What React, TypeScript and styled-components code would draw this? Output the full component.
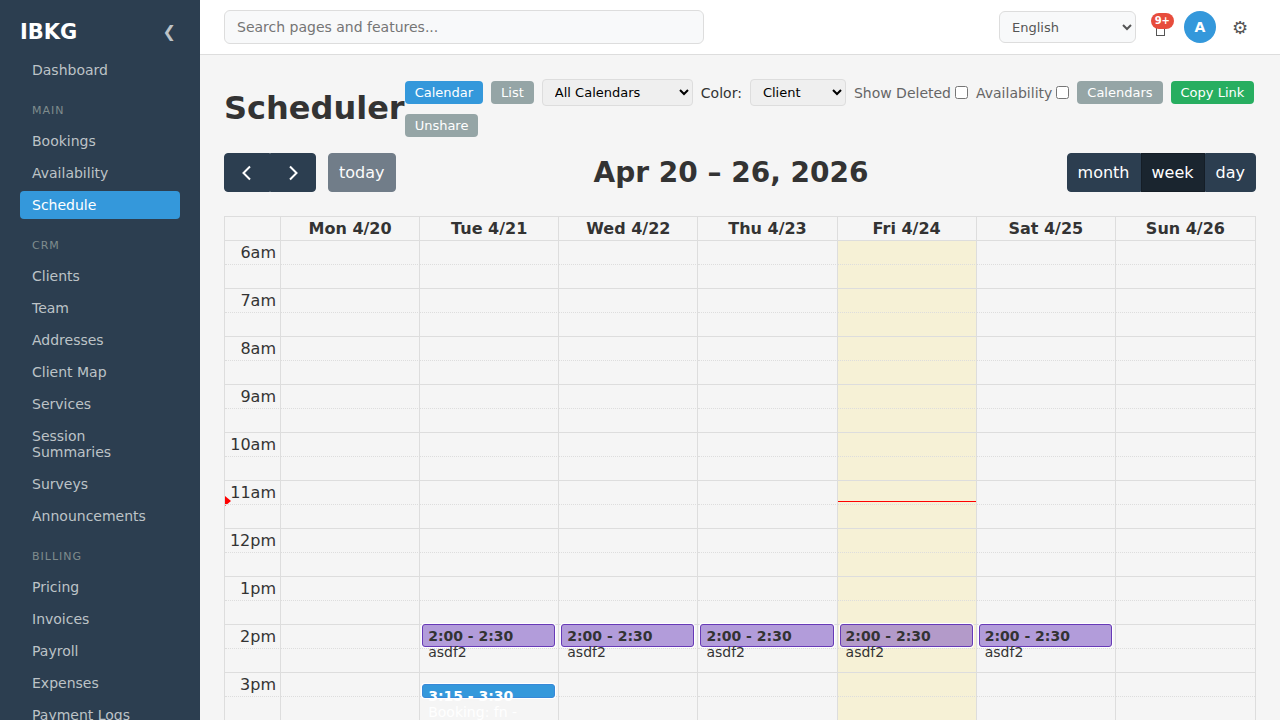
import React from "react";
import styled, { createGlobalStyle, css } from "styled-components";

const GlobalStyle = createGlobalStyle`
  *, *::before, *::after { box-sizing: border-box; }
  body {
    margin: 0;
    background: #f5f5f5;
    color: #333;
    font-family: "DejaVu Sans", sans-serif;
    font-size: 16px;
  }
  button, input, select { font-family: inherit; margin: 0; }
`;

const Shell = styled.div`
  display: flex;
  height: 100vh;
  overflow: hidden;
`;

/* Sidebar */
const Sidebar = styled.aside`
  flex: 0 0 200px;
  padding: 20px;
  background: #2c3e50;
  overflow-y: auto;
  scrollbar-width: none;
`;

const Brand = styled.div`
  display: flex;
  align-items: center;
  justify-content: space-between;
  height: 24px;
  margin-bottom: 12px;
  color: #fff;
  font-size: 21px;
  font-weight: 700;
`;

const CollapseButton = styled.button`
  padding: 0 4px;
  border: 0;
  background: none;
  color: #bdc3c7;
  font-size: 16px;
  line-height: 24px;
  cursor: pointer;
`;

const NavHeading = styled.h2`
  margin: 20px 12px 10px;
  color: #7f8c8d;
  font-size: 11px;
  font-weight: 400;
  line-height: 13px;
  letter-spacing: 1px;
  text-transform: uppercase;
`;

const NavList = styled.ul`
  display: flex;
  flex-direction: column;
  gap: 4px;
  margin: 0;
  padding: 0;
  list-style: none;
`;

const NavLink = styled.a<{ $active?: boolean }>`
  display: block;
  padding: 6px 12px;
  border-radius: 4px;
  background: ${(p) => (p.$active ? "#3498db" : "transparent")};
  color: ${(p) => (p.$active ? "#fff" : "#bdc3c7")};
  font-size: 14px;
  line-height: 16px;
  text-decoration: none;
`;

/* Top bar */
const Column = styled.div`
  display: flex;
  flex: 1;
  flex-direction: column;
  min-width: 0;
`;

const TopBar = styled.header`
  display: flex;
  flex: none;
  align-items: center;
  justify-content: space-between;
  padding: 10px 24px;
  border-bottom: 1px solid #ddd;
  background: #fff;
`;

const SearchInput = styled.input`
  flex: 0 1 480px;
  height: 34px;
  padding: 0 12px;
  border: 1px solid #ddd;
  border-radius: 6px;
  background: #f8f9fa;
  font-size: 14px;
  &::placeholder { color: #757575; }
`;

const TopActions = styled.div`
  display: flex;
  align-items: center;
  gap: 8px;
`;

const LanguageSelect = styled.select`
  width: 137px;
  height: 32px;
  padding: 0 8px;
  border: 1px solid #ddd;
  border-radius: 6px;
  background: #f8f9fa;
  color: #555;
  font-size: 13px;
`;

const IconButton = styled.button`
  position: relative;
  display: grid;
  place-items: center;
  width: 32px;
  height: 32px;
  padding: 0;
  border: 0;
  background: none;
  color: #555;
  font-size: 18px;
  cursor: pointer;
`;

const Badge = styled.span`
  position: absolute;
  top: 2px;
  right: 2px;
  padding: 0 4px;
  border-radius: 8px;
  background: #e74c3c;
  color: #fff;
  font-size: 10px;
  font-weight: 700;
  line-height: 16px;
`;

const Avatar = styled.button`
  width: 32px;
  height: 32px;
  padding: 0;
  border: 0;
  border-radius: 50%;
  background: #3498db;
  color: #fff;
  font-size: 14px;
  font-weight: 700;
`;

/* Page */
const Page = styled.main`
  flex: 1;
  padding: 24px;
  overflow-y: auto;
  scrollbar-width: none;
`;

const PageHeader = styled.div`
  display: flex;
  align-items: center;
  margin-bottom: 16px;
`;

const PageTitle = styled.h1`
  margin: 0;
  font-size: 32px;
  line-height: 37px;
`;

const Controls = styled.div`
  display: flex;
  flex: 1;
  flex-wrap: wrap;
  align-items: center;
  gap: 8px;
`;

const tones = { primary: "#3498db", muted: "#95a5a6", success: "#27ae60" };

const SmallButton = styled.button<{ $tone: keyof typeof tones }>`
  height: 23px;
  padding: 0 10px;
  border: 0;
  border-radius: 4px;
  background: ${(p) => tones[p.$tone]};
  color: #fff;
  font-size: 13px;
  line-height: 15px;
  cursor: pointer;
`;

const ControlSelect = styled.select<{ $width: number }>`
  width: ${(p) => p.$width}px;
  height: 27px;
  padding: 0 8px;
  border: 1px solid #ddd;
  border-radius: 4px;
  background: #efefef;
  color: #000;
  font-size: 13px;
`;

const FieldLabel = styled.label`
  font-size: 14px;
`;

const CheckLabel = styled.label`
  display: flex;
  align-items: center;
  gap: 4px;
  color: #666;
  font-size: 14px;
  input { width: 13px; height: 13px; }
`;

/* Calendar toolbar */
const CalendarBar = styled.div`
  display: flex;
  align-items: center;
  justify-content: space-between;
  margin-bottom: 24px;
`;

const BarGroup = styled.div`
  display: flex;
  gap: 12px;
`;

const ButtonGroup = styled.div`
  display: flex;
  > button { border-radius: 0; }
  > button:first-child { border-radius: 4px 0 0 4px; }
  > button:last-child { border-radius: 0 4px 4px 0; }
`;

const BarButton = styled.button<{ $active?: boolean }>`
  display: flex;
  align-items: center;
  justify-content: center;
  height: 39px;
  min-width: 46px;
  padding: 0 10px;
  border: 1px solid #2c3e50;
  border-radius: 4px;
  background: #2c3e50;
  color: #fff;
  font-size: 16px;
  cursor: pointer;
  ${(p) =>
    p.$active &&
    css`
      border-color: #151e27;
      background: #1a252f;
    `}
  &:disabled { opacity: 0.65; cursor: default; }
`;

const RangeTitle = styled.h2`
  margin: 0;
  font-size: 28px;
  line-height: 33px;
`;

/* Week grid */
const WeekTable = styled.table`
  width: 100%;
  border-collapse: separate;
  border-spacing: 0;
  table-layout: fixed;
  border: 1px solid #ddd;
  tr > :last-child { border-right: 0; }
`;

const AxisHead = styled.th`
  width: 56px;
  padding: 0;
  border-right: 1px solid #ddd;
`;

const DayHead = styled.th`
  height: 23px;
  padding: 0;
  border-right: 1px solid #ddd;
  font-size: 16px;
  line-height: 22px;
`;

const AxisCell = styled.th<{ $half?: boolean }>`
  position: relative;
  height: 24px;
  padding: 0 4px;
  border-top: 1px ${(p) => (p.$half ? "dotted" : "solid")} #ddd;
  border-right: 1px solid #ddd;
  font-size: 16px;
  font-weight: 400;
  line-height: 22px;
  text-align: right;
`;

const SlotCell = styled.td<{ $half?: boolean; $today?: boolean }>`
  position: relative;
  padding: 0;
  border-top: 1px ${(p) => (p.$half ? "dotted" : "solid")} #ddd;
  border-right: 1px solid #ddd;
  background: ${(p) => (p.$today ? "rgba(255, 220, 40, 0.15)" : "transparent")};
`;

const eventKinds = {
  session: css`
    top: -1px;
    height: 23px;
    border-color: #673ab7;
    background: rgba(98, 49, 187, 0.45);
    color: #333;
  `,
  booking: css`
    top: 11px;
    height: 14px;
    border-color: #3788d8;
    background: #3498db;
    color: #fff;
  `,
};

const Event = styled.a<{ $kind: keyof typeof eventKinds }>`
  position: absolute;
  z-index: 1;
  left: 2px;
  right: 3px;
  padding: 3px 5px;
  border: 1px solid;
  border-radius: 3px;
  box-shadow: 0 0 0 1px #fff;
  font-size: 14px;
  line-height: 16px;
  text-align: left;
  text-decoration: none;
  ${(p) => eventKinds[p.$kind]}
`;

const EventTime = styled.strong`
  display: block;
  white-space: nowrap;
`;

const NowLine = styled.div`
  position: absolute;
  z-index: 2;
  top: 20px;
  left: 0;
  right: 0;
  border-top: 1px solid #f00;
`;

const NowArrow = styled.div`
  position: absolute;
  top: 15px;
  left: 0;
  border-style: solid;
  border-width: 5px 0 5px 6px;
  border-color: transparent transparent transparent #f00;
`;

const sections = [
  { heading: "", items: ["Dashboard"] },
  { heading: "Main", items: ["Bookings", "Availability", "Schedule"] },
  {
    heading: "CRM",
    items: ["Clients", "Team", "Addresses", "Client Map", "Services", "Session Summaries", "Surveys", "Announcements"],
  },
  { heading: "Billing", items: ["Pricing", "Invoices", "Payroll", "Expenses", "Payment Logs"] },
];

const days = ["Mon 4/20", "Tue 4/21", "Wed 4/22", "Thu 4/23", "Fri 4/24", "Sat 4/25", "Sun 4/26"];
const hours = ["6am", "7am", "8am", "9am", "10am", "11am", "12pm", "1pm", "2pm", "3pm"];
const TODAY = 4;

type CalendarEvent = { day: number; hour: string; kind: keyof typeof eventKinds; time: string; title: string };

const events: CalendarEvent[] = [
  ...[1, 2, 3, 4, 5].map((day) => ({
    day,
    hour: "2pm",
    kind: "session" as const,
    time: "2:00 - 2:30",
    title: "asdf2",
  })),
  { day: 1, hour: "3pm", kind: "booking", time: "3:15 - 3:30", title: "Booking: fn -" },
];

function Chevron({ d }: { d: string }) {
  return (
    <svg width="24" height="24" viewBox="0 0 24 24" fill="none" stroke="currentColor" strokeWidth="2" aria-hidden="true">
      <path d={d} />
    </svg>
  );
}

function NotificationIcon() {
  return (
    <svg width="10" height="18" viewBox="0 0 10 18" fill="none" stroke="currentColor" aria-hidden="true">
      <rect x="1.5" y="5.5" width="8" height="12" />
    </svg>
  );
}

export default function App() {
  return (
    <Shell>
      <GlobalStyle />
      <Sidebar>
        <Brand>
          IBKG
          <CollapseButton aria-label="Collapse sidebar">❮</CollapseButton>
        </Brand>
        <nav>
          {sections.map((section) => (
            <React.Fragment key={section.heading}>
              {section.heading && <NavHeading>{section.heading}</NavHeading>}
              <NavList>
                {section.items.map((item) => (
                  <li key={item}>
                    <NavLink href="#" $active={item === "Schedule"}>
                      {item}
                    </NavLink>
                  </li>
                ))}
              </NavList>
            </React.Fragment>
          ))}
        </nav>
      </Sidebar>

      <Column>
        <TopBar>
          <SearchInput type="search" placeholder="Search pages and features..." aria-label="Search" />
          <TopActions>
            <LanguageSelect aria-label="Language">
              <option>English</option>
            </LanguageSelect>
            <IconButton aria-label="Notifications">
              <NotificationIcon />
              <Badge>9+</Badge>
            </IconButton>
            <Avatar aria-label="Account">A</Avatar>
            <IconButton aria-label="Settings">⚙</IconButton>
          </TopActions>
        </TopBar>

        <Page>
          <PageHeader>
            <PageTitle>Scheduler</PageTitle>
            <Controls>
              <SmallButton $tone="primary">Calendar</SmallButton>
              <SmallButton $tone="muted">List</SmallButton>
              <ControlSelect $width={151} aria-label="Calendar">
                <option>All Calendars</option>
              </ControlSelect>
              <FieldLabel htmlFor="color-by">Color:</FieldLabel>
              <ControlSelect $width={96} id="color-by">
                <option>Client</option>
              </ControlSelect>
              <CheckLabel>
                Show Deleted
                <input type="checkbox" />
              </CheckLabel>
              <CheckLabel>
                Availability
                <input type="checkbox" />
              </CheckLabel>
              <SmallButton $tone="muted">Calendars</SmallButton>
              <SmallButton $tone="success">Copy Link</SmallButton>
              <SmallButton $tone="muted">Unshare</SmallButton>
            </Controls>
          </PageHeader>

          <CalendarBar>
            <BarGroup>
              <ButtonGroup>
                <BarButton aria-label="Previous week">
                  <Chevron d="M15 5.5 8.5 12l6.5 6.5" />
                </BarButton>
                <BarButton aria-label="Next week">
                  <Chevron d="M9 5.5 15.5 12 9 18.5" />
                </BarButton>
              </ButtonGroup>
              <BarButton disabled>today</BarButton>
            </BarGroup>
            <RangeTitle>Apr 20 – 26, 2026</RangeTitle>
            <ButtonGroup>
              <BarButton>month</BarButton>
              <BarButton $active>week</BarButton>
              <BarButton>day</BarButton>
            </ButtonGroup>
          </CalendarBar>

          <WeekTable>
            <thead>
              <tr>
                <AxisHead aria-label="Time" />
                {days.map((day) => (
                  <DayHead key={day} scope="col">
                    {day}
                  </DayHead>
                ))}
              </tr>
            </thead>
            <tbody>
              {hours.map((hour) => (
                <React.Fragment key={hour}>
                  <tr>
                    <AxisCell scope="row">
                      {hour}
                      {hour === "11am" && <NowArrow />}
                    </AxisCell>
                    {days.map((day, i) => (
                      <SlotCell key={day} $today={i === TODAY}>
                        {hour === "11am" && i === TODAY && <NowLine />}
                        {events
                          .filter((e) => e.day === i && e.hour === hour)
                          .map((e) => (
                            <Event key={e.time} href="#" $kind={e.kind}>
                              <EventTime>{e.time}</EventTime>
                              {e.title}
                            </Event>
                          ))}
                      </SlotCell>
                    ))}
                  </tr>
                  <tr>
                    <AxisCell as="td" $half />
                    {days.map((day, i) => (
                      <SlotCell key={day} $half $today={i === TODAY} />
                    ))}
                  </tr>
                </React.Fragment>
              ))}
            </tbody>
          </WeekTable>
        </Page>
      </Column>
    </Shell>
  );
}
